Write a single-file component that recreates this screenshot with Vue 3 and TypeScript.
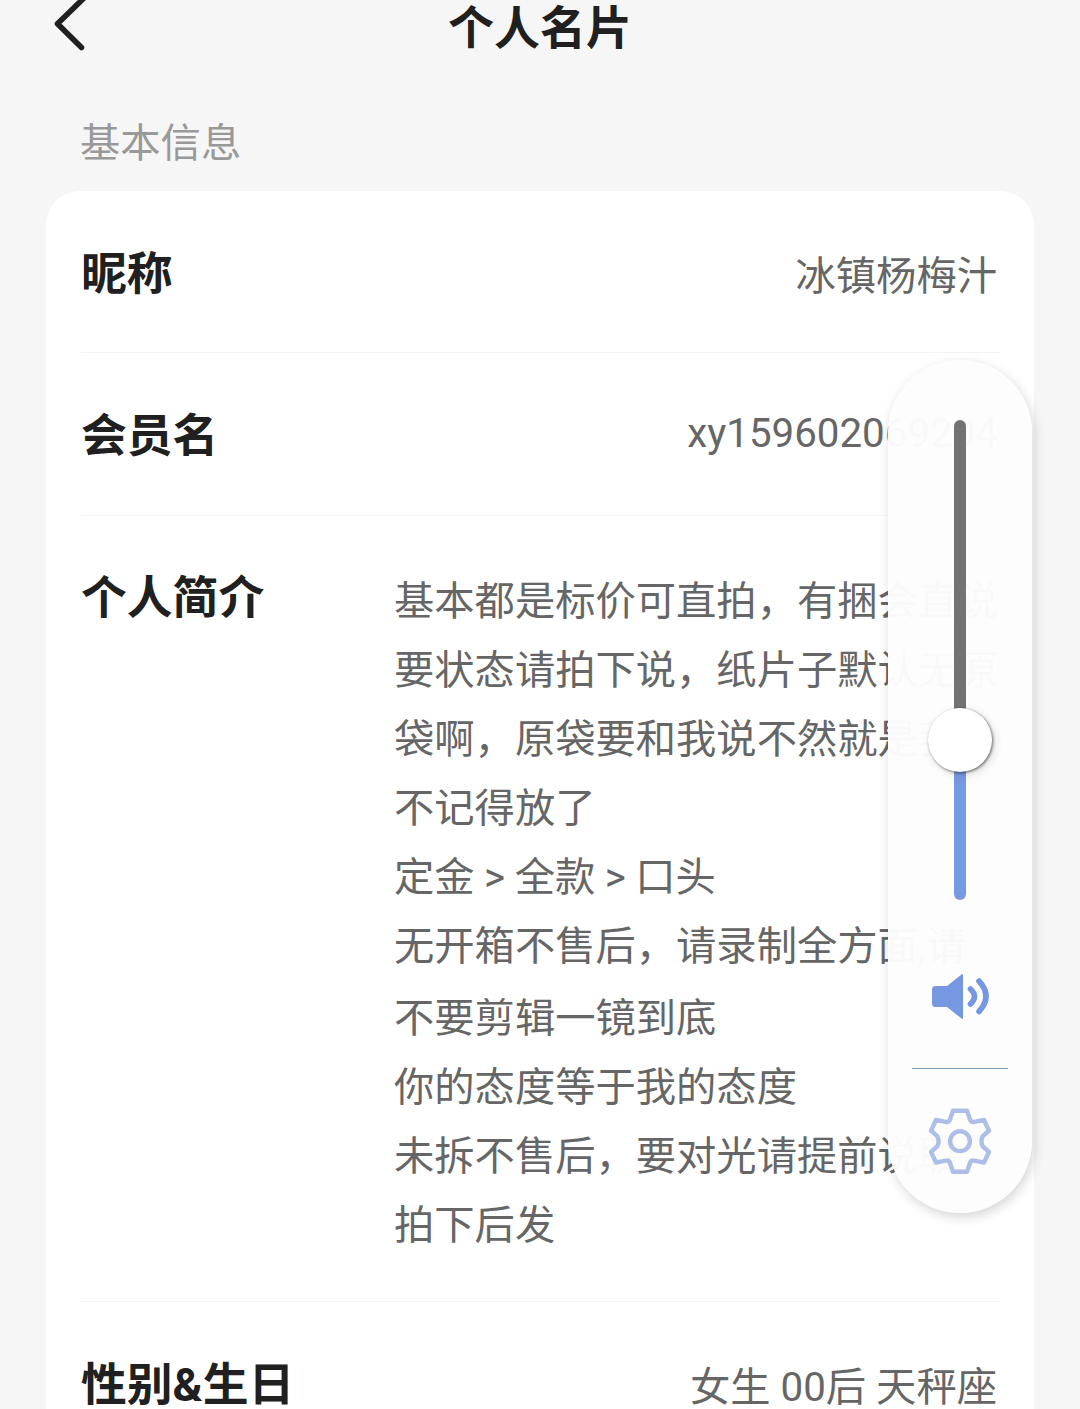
<script setup lang="ts">
const bio: string[] = [
  '基本都是标价可直拍，有捆会直说',
  '要状态请拍下说，纸片子默认无原',
  '袋啊，原袋要和我说不然就是我',
  '不记得放了',
  '定金 > 全款 > 口头',
  '无开箱不售后，请录制全方面,请',
  '不要剪辑一镜到底',
  '你的态度等于我的态度',
  '未拆不售后，要对光请提前说取',
  '拍下后发',
]
</script>

<template>
  <main class="page">
    <header class="bar">
      <svg class="back" width="40" height="60" viewBox="0 0 40 60" fill="none">
        <path d="M34 -2L7.500 23.800L31.500 47.500" />
      </svg>
      <h1>个人名片</h1>
    </header>
    <h2>基本信息</h2>
    <section class="card">
      <div class="row name"><b>昵称</b><span>冰镇杨梅汁</span></div>
      <div class="row member"><b>会员名</b><span>xy159602069204</span></div>
      <div class="row intro">
        <b>个人简介</b>
        <div class="bio"><p v-for="line in bio" :key="line">{{ line }}</p></div>
      </div>
      <div class="row birth"><b>性别&amp;生日</b><span>女生 00后 天秤座</span></div>
    </section>

    <aside class="volume">
      <div class="slider">
        <div class="rest"></div>
        <div class="level"></div>
        <div class="knob"></div>
      </div>
      <svg class="speaker" width="64" height="50" viewBox="0 0 64 50" fill="none">
        <path d="M7.500 14H19L33.500 2.500Q35 1.500 35 3V46Q35 47.500 33.500 46.500L19 35H7.500Q4 35 4 31.500V17.500Q4 14 7.500 14Z" fill="#7598e1" />
        <path d="M42.500 17Q50.500 24.500 42.500 32M51 9Q65 24.300 51 39.500" stroke="#7598e1" stroke-width="5.600" stroke-linecap="round" />
      </svg>
      <div class="line"></div>
      <svg class="gear" width="66" height="68" viewBox="0 0 66 68" fill="none" stroke="#adbfe8" stroke-width="4.400" stroke-linejoin="round">
        <path d="M26 3.800H40L43 12.500Q44 15.500 47 14.800L57 13L62 23.700L56.500 28.500Q54.500 30 54.500 34.200Q54.500 38.500 56.500 40L62 44.800L57 55.500L47 53.700Q44 53 43 56L40 64.700H26L23 56Q22 53 19 53.700L9 55.500L4 44.800L9.500 40Q11.500 38.500 11.500 34.200Q11.500 30 9.500 28.500L4 23.700L9 13L19 14.800Q22 15.500 23 12.500Z" />
        <circle cx="33" cy="34.200" r="9.900" />
      </svg>
    </aside>
  </main>
</template>

<style>
body { margin: 0; background: #f6f6f6; overflow: hidden; }
</style>

<style scoped>
.page {
  position: relative;
  width: 1080px;
  height: 1409px;
  overflow: hidden;
  background: #f6f6f6;
  font-family: Roboto, "Noto Sans CJK SC", sans-serif;
  font-size: 40.3px;
  color: #666;
}
h1, h2, p { margin: 0; font-weight: 400; }
.bar { position: relative; height: 110px; text-align: center; }
.back { position: absolute; left: 50px; top: 0; }
.back path { stroke: #202020; stroke-width: 5.6; stroke-linecap: round; stroke-linejoin: round; }
h1 { font-size: 46px; font-weight: 700; line-height: 57px; color: #202020; }
h2 { margin-left: 80px; height: 81px; font-size: 40.3px; line-height: 67px; color: #999; }
.card {
  box-sizing: border-box;
  width: 988px;
  height: 1300px;
  margin-left: 46px;
  padding: 0 34px 0 35px;
  border-radius: 34px;
  background: #fff;
}
.row {
  box-sizing: border-box;
  display: flex;
  justify-content: space-between;
  border-bottom: 1px solid #f3f3f3;
}
.row b { font-size: 45.8px; font-weight: 700; line-height: 58px; color: #202020; white-space: nowrap; }
.row span { line-height: 62px; margin-right: 3px; white-space: nowrap; }
.name { height: 162px; padding-top: 55px; }
.member { height: 163px; padding-top: 55px; }
.member span { line-height: 52px; margin-right: 2px; }
.intro { height: 786px; padding-top: 54px; }
.birth { height: 190px; padding-top: 55px; border: 0; }
.bio { width: 606px; white-space: nowrap; word-spacing: -.5px; }
.bio p { height: 69px; line-height: 64px; }
.bio p:nth-child(6) { height: 72px; }
.volume {
  position: absolute;
  left: 888px;
  top: 360px;
  box-sizing: border-box;
  width: 144px;
  height: 853px;
  padding-top: 60px;
  border-radius: 72px;
  background: rgba(253, 253, 253, .975);
  box-shadow: 2px 4px 12px rgba(0, 0, 0, .17);
  display: flex;
  flex-direction: column;
  align-items: center;
}
.slider { position: relative; width: 12px; height: 480px; }
.rest { height: 320px; border-radius: 6px 6px 0 0; background: #737373; }
.level { height: 160px; border-radius: 0 0 6px 6px; background: #7799e2; }
.knob {
  position: absolute;
  left: -26px;
  top: 288px;
  width: 64px;
  height: 64px;
  border-radius: 50%;
  background: #fff;
  box-shadow: 1px 1px 3px rgba(0, 0, 0, .55), 3px 3px 10px rgba(0, 0, 0, .12);
}
.speaker { margin-top: 72px; }
.line { width: 96px; height: 1px; margin-top: 46px; background: #7b9bb9; }
.gear { margin-top: 38px; }
</style>
